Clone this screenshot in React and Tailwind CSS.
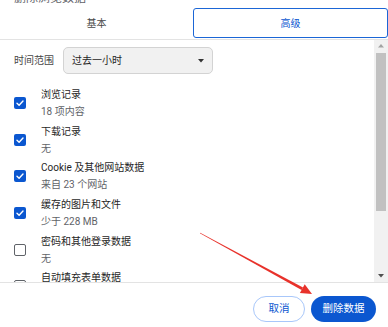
import React from "react";

const items = [
  { title: "浏览记录", sub: "18 项内容", checked: true },
  { title: "下载记录", sub: "无", checked: true },
  { title: "Cookie 及其他网站数据", sub: "来自 23 个网站", checked: true },
  { title: "缓存的图片和文件", sub: "少于 228 MB", checked: true },
  { title: "密码和其他登录数据", sub: "无", checked: false },
  { title: "自动填充表单数据", sub: "", checked: false },
];

function Checkbox({ checked }) {
  if (checked) {
    return (
      <div className="w-[12px] h-[12px] rounded-[2px] bg-[#0b57d0] flex items-center justify-center shrink-0">
        <svg width="12" height="12" viewBox="0 0 12 12">
          <polyline points="3,6.2 5.1,8.2 9,4" fill="none" stroke="white" strokeWidth="1.4" strokeLinecap="round" strokeLinejoin="round" />
        </svg>
      </div>
    );
  }
  return <div className="w-[12px] h-[12px] rounded-[2px] border-[1.5px] border-[#5f6368] shrink-0" />;
}

export default function App() {
  return (
    <div
      className="relative w-[388px] h-[327px] overflow-hidden bg-white flex flex-col"
      style={{ fontFamily: 'Roboto, "Noto Sans CJK SC", sans-serif' }}
    >
      {/* clipped title */}
      <div className="h-[8px] overflow-hidden pl-[14px] shrink-0">
        <div className="text-[12px] leading-[12px] -mt-[8px] text-[#5f6368]">删除浏览数据</div>
      </div>

      {/* tabs */}
      <div className="h-[32px] shrink-0 flex border-b border-[#e3e3e3]">
        <div className="w-[193px] h-[30px] flex items-center justify-center text-[10px] text-[#474747]">基本</div>
        <div className="w-[195px] h-[30px] border-[1.5px] border-[#1b66d6] rounded-[3px] flex items-center justify-center text-[10px] text-[#0b57d0]">
          高级
        </div>
      </div>

      {/* scroll area */}
      <div className="flex h-[243px] shrink-0 border-b border-[#e3e3e3]">
        <div className="flex-1 overflow-hidden">
          <div className="flex items-center pl-[14px] pt-[7px] h-[34px]">
            <span className="text-[10px] text-[#474747] w-[49px]">时间范围</span>
            <div className="w-[150px] h-[27px] rounded-[5px] border border-[#d3d3d3] bg-[#f1f1f1] flex items-center justify-between pl-[8px] pr-[8px]">
              <span className="text-[10px] text-[#1f1f1f]">过去一小时</span>
              <svg width="6" height="4" viewBox="0 0 6 4">
                <polygon points="0,0 6,0 3,3.5" fill="#333" />
              </svg>
            </div>
          </div>
          <div className="pt-[11px]">
            {items.map((it, i) => (
              <div key={i} className="h-[36.6px] flex items-center pl-[14px]">
                <Checkbox checked={it.checked} />
                <div className="ml-[15px] flex flex-col">
                  <span className="text-[10px] leading-[17px] text-[#1f1f1f]">{it.title}</span>
                  <span className="text-[10px] leading-[17px] text-[#5f6368] h-[17px]">{it.sub}</span>
                </div>
              </div>
            ))}
          </div>
        </div>
        {/* scrollbar */}
        <div className="w-[14px] bg-[#f1f1f1] flex flex-col items-center">
          <div className="h-[12px] flex items-center justify-center">
            <svg width="6" height="4" viewBox="0 0 6 4">
              <polygon points="0,3.5 6,3.5 3,0" fill="#a3a3a3" />
            </svg>
          </div>
          <div className="w-[10px] h-[158px] bg-[#c1c1c1] mt-[1px]" />
          <div className="flex-1" />
          <div className="h-[12px] flex items-center justify-center">
            <svg width="6" height="4" viewBox="0 0 6 4">
              <polygon points="0,0 6,0 3,3.5" fill="#505050" />
            </svg>
          </div>
        </div>
      </div>

      {/* footer */}
      <div className="flex justify-end gap-[6px] pt-[13px] pr-[12px]">
        <button className="w-[52px] h-[26px] rounded-full border border-[#a8c7fa] bg-white text-[10.5px] text-[#0b57d0]">
          取消
        </button>
        <button className="w-[65px] h-[26px] rounded-full bg-[#0b57d0] text-[10.5px] text-white">
          删除数据
        </button>
      </div>

      {/* red annotation arrow */}
      <svg className="absolute left-0 top-0 pointer-events-none" width="388" height="327" viewBox="0 0 388 327">
        <polygon points="199.86,233.26 200.14,232.74 303.0,287.4 301.6,290.0" fill="#e8322b" />
        <polygon points="312,294 299.9,293.1 304.7,284.3" fill="#e8322b" />
      </svg>
    </div>
  );
}
